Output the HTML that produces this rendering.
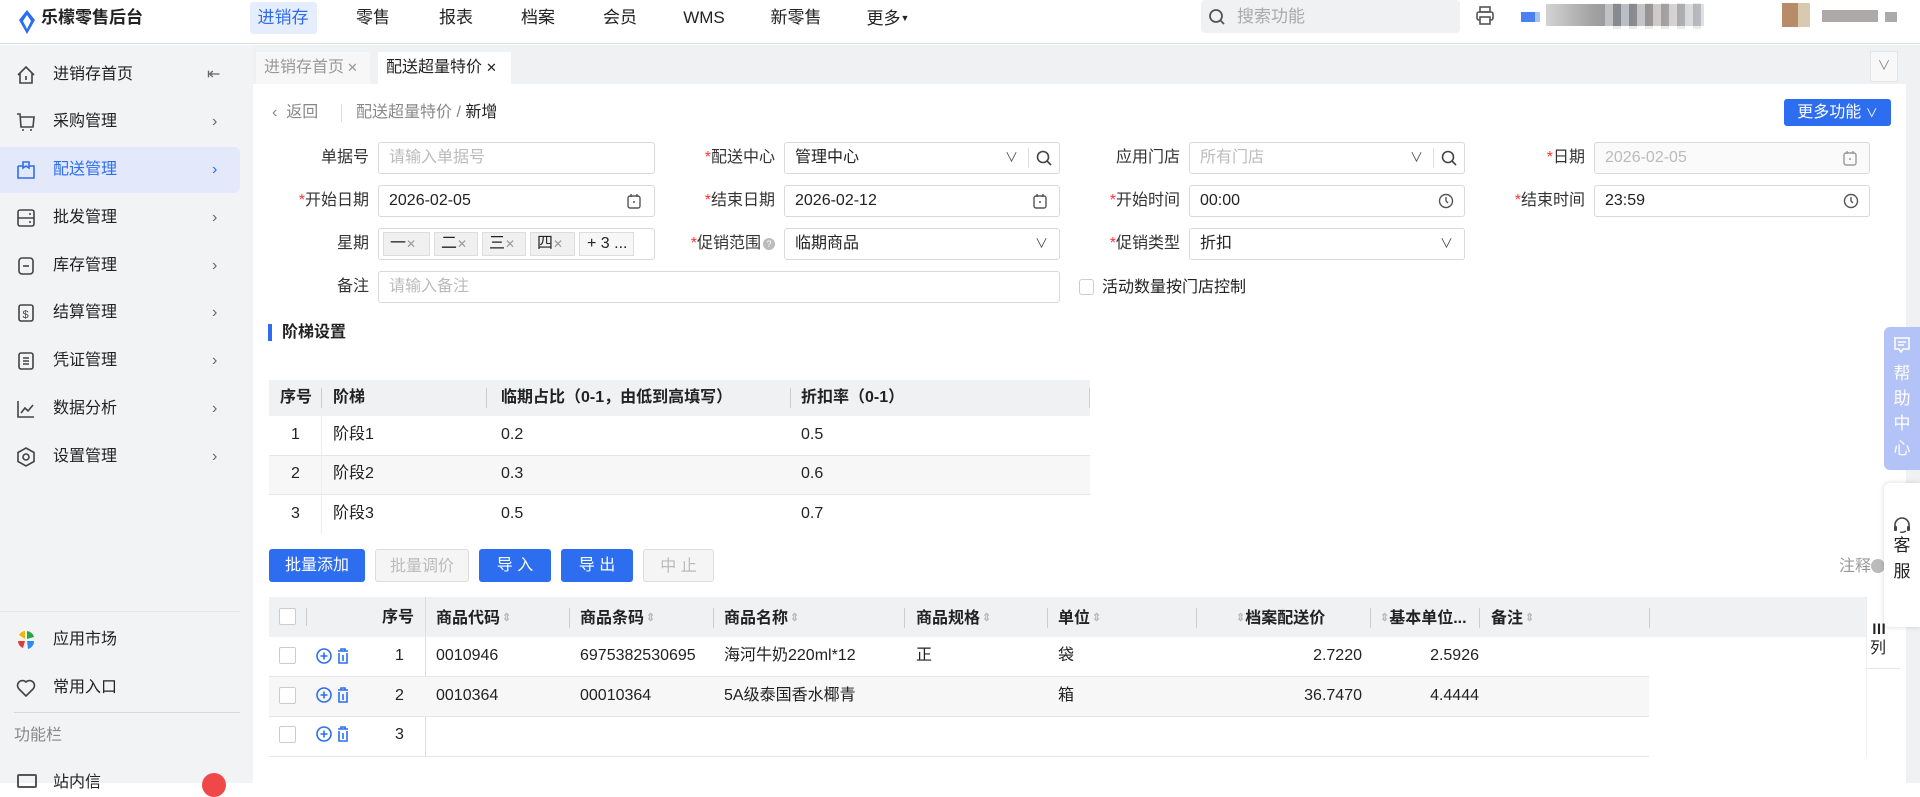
<!DOCTYPE html>
<html><head><meta charset="utf-8">
<style>
*{box-sizing:border-box;margin:0;padding:0}
body{width:1920px;height:783px;overflow:hidden;position:relative;background:#fff;font-family:"Liberation Sans","Noto Sans CJK SC",sans-serif;font-size:16px;line-height:22px;color:#222}
.a{position:absolute}
.hdr{left:0;top:0;width:1920px;height:44px;background:#fff;border-bottom:1px solid #ddd}
.nav{top:0;height:44px;line-height:36px;font-size:17px;color:#222;transform:translateX(-50%)}
.side{left:0;top:45px;width:253px;height:738px;background:#f2f3f5}
.si{left:0;width:240px;height:46px;line-height:46px;padding-left:53px;font-size:16px;color:#222}
.si svg{position:absolute;left:16px;top:13px}
.si .ch{position:absolute;left:212px;top:0;color:#666;font-size:16px}
.tabbar{left:253px;top:45px;width:1667px;height:39px;background:#f0f1f3}
.lab{height:32px;line-height:32px;text-align:right;font-size:16px;color:#333}
.lab i{color:#f33;font-style:normal}
.inp{height:32px;border:1px solid #d9d9d9;border-radius:3px;line-height:30px;padding-left:10px;font-size:16px;color:#222;background:#fff}
.ph{color:#bbb}
.ico{position:absolute;top:7px}
.th{background:#f0f1f3;font-weight:bold;color:#222}
.btn{height:33px;line-height:33px;text-align:center;border-radius:3px;font-size:16px}
.bb{background:#2d6df0;color:#fff}
.bd{background:#f5f5f5;color:#bbb;border:1px solid #ddd}
.sep{width:1px;background:#ccc}
.c{font-size:16px;color:#222;line-height:22px}
.so{display:inline-block;color:#bbb;font-size:11px;vertical-align:2px;margin-left:2px}
.cb{width:17px;height:17px;border:1px solid #ccc;border-radius:2px;background:#fff}
</style></head><body>
<div class="a hdr"></div>
<svg class="a" style="left:17px;top:10px" width="20" height="24" viewBox="0 0 20 24"><path d="M10 0 L18 10 L10 24 L2 10 Z" fill="#2d6df0"/><path d="M10 5 L14 11 L10 19 L6 11Z" fill="#fff"/></svg>
<div class="a" style="left:41px;top:0;line-height:36px;font-size:17px;font-weight:bold;color:#222">乐檬零售后台</div>
<div class="a" style="left:250px;top:2px;width:67px;height:32px;background:#e6edfc;border-radius:3px"></div>
<div class="a nav" style="left:283px;color:#2d6df0">进销存</div>
<div class="a nav" style="left:373px">零售</div>
<div class="a nav" style="left:456px">报表</div>
<div class="a nav" style="left:538px">档案</div>
<div class="a nav" style="left:620px">会员</div>
<div class="a nav" style="left:704px">WMS</div>
<div class="a nav" style="left:796px">新零售</div>
<div class="a nav" style="left:888px">更多<span style="font-size:9px;vertical-align:3px">▼</span></div>
<div class="a" style="left:1201px;top:0;width:259px;height:33px;background:#f0f1f3;border-radius:4px"></div>
<svg class="a" style="left:1208px;top:8px" width="18" height="18" viewBox="0 0 18 18"><circle cx="8" cy="8" r="6" fill="none" stroke="#555" stroke-width="1.8"/><path d="M12.5 12.5L16 16" stroke="#555" stroke-width="1.8"/></svg>
<div class="a" style="left:1237px;top:0;line-height:33px;font-size:17px;color:#aaa">搜索功能</div>
<svg class="a" style="left:1476px;top:6px" width="18" height="20" viewBox="0 0 18 20"><rect x="4" y="1" width="10" height="5" fill="none" stroke="#555" stroke-width="1.6"/><rect x="1" y="6" width="16" height="8" rx="2" fill="none" stroke="#555" stroke-width="1.6"/><rect x="4" y="11" width="10" height="7" fill="#fff" stroke="#555" stroke-width="1.6"/></svg>
<div class="a" style="left:1521px;top:12px;width:14px;height:10px;background:#4a80f0"></div>
<div class="a" style="left:1535px;top:12px;width:5px;height:10px;background:#a8c2f5"></div>
<div class="a" style="left:1546px;top:4px;width:158px;height:22px;background:linear-gradient(90deg,#c8c8c8,#8a8a8a 30%,#707680 50%,#9a9090 70%,#bcc2c8);opacity:.8"></div>
<div class="a" style="left:1605px;top:3px;width:100px;height:26px;background:repeating-linear-gradient(90deg,rgba(255,255,255,.4) 0 8px,rgba(0,0,0,.08) 8px 16px)"></div>
<div class="a" style="left:1782px;top:3px;width:16px;height:24px;background:#b88c68"></div>
<div class="a" style="left:1798px;top:3px;width:12px;height:24px;background:#d8cab0"></div>
<div class="a" style="left:1822px;top:10px;width:56px;height:12px;background:#9a9494;opacity:.8"></div>
<div class="a" style="left:1885px;top:12px;width:12px;height:10px;background:#aaa"></div>

<div class="a side"></div>
<div class="a si" style="top:52px"><svg width="20" height="20" viewBox="0 0 20 20"><path d="M2 10L10 2L18 10M4 8V18H16V8M10 11V15" fill="none" stroke="#444" stroke-width="1.6"/></svg>进销存首页<span class="ch" style="left:207px">⇤</span></div>
<div class="a si" style="top:99px"><svg width="20" height="20" viewBox="0 0 20 20"><path d="M1 2H4L5 15H17L18 5H5" fill="none" stroke="#444" stroke-width="1.6"/><circle cx="7" cy="18" r="1" fill="#444"/><circle cx="15" cy="18" r="1" fill="#444"/></svg>采购管理<span class="ch">›</span></div>
<div class="a si" style="top:147px;background:#e3e9fa;border-radius:0 6px 6px 0;color:#2d6df0"><svg width="20" height="20" viewBox="0 0 20 20"><path d="M2 6V18H18V6L13 6M7 6H2M7 2V8L10 6L13 8V2Z" fill="none" stroke="#2d6df0" stroke-width="1.6"/></svg>配送管理<span class="ch" style="color:#2d6df0">›</span></div>
<div class="a si" style="top:195px"><svg width="20" height="20" viewBox="0 0 20 20"><rect x="2" y="2" width="16" height="16" rx="2" fill="none" stroke="#444" stroke-width="1.6"/><path d="M2 10H18M13 6H15M13 14H15" stroke="#444" stroke-width="1.6"/></svg>批发管理<span class="ch">›</span></div>
<div class="a si" style="top:243px"><svg width="20" height="20" viewBox="0 0 20 20"><rect x="3" y="2" width="14" height="16" rx="3" fill="none" stroke="#444" stroke-width="1.6"/><path d="M7 10H13" stroke="#444" stroke-width="1.6"/></svg>库存管理<span class="ch">›</span></div>
<div class="a si" style="top:290px"><svg width="20" height="20" viewBox="0 0 20 20"><rect x="3" y="2" width="14" height="16" rx="2" fill="none" stroke="#444" stroke-width="1.6"/><text x="6.5" y="15" font-size="11" fill="#444" font-family="Liberation Sans">$</text></svg>结算管理<span class="ch">›</span></div>
<div class="a si" style="top:338px"><svg width="20" height="20" viewBox="0 0 20 20"><rect x="3" y="2" width="14" height="16" rx="2" fill="none" stroke="#444" stroke-width="1.6"/><path d="M7 7H13M7 10H13M7 13H13" stroke="#444" stroke-width="1.4"/></svg>凭证管理<span class="ch">›</span></div>
<div class="a si" style="top:386px"><svg width="20" height="20" viewBox="0 0 20 20"><path d="M2 2V18H18M5 14L9 9L12 12L17 6" fill="none" stroke="#444" stroke-width="1.6"/></svg>数据分析<span class="ch">›</span></div>
<div class="a si" style="top:434px"><svg width="20" height="20" viewBox="0 0 20 20"><path d="M10 1L18 5.5V14.5L10 19L2 14.5V5.5Z" fill="none" stroke="#444" stroke-width="1.6"/><circle cx="10" cy="10" r="3" fill="none" stroke="#444" stroke-width="1.6"/></svg>设置管理<span class="ch">›</span></div>
<div class="a" style="left:0;top:611px;width:240px;height:1px;background:#e8e9eb"></div>
<div class="a si" style="top:617px"><svg width="20" height="20" viewBox="0 0 20 20"><path d="M9 1A8 8 0 0 0 3 5L9 9Z" fill="#f5b400"/><path d="M11 1A8 8 0 0 1 18 7L11 9Z" fill="#27a844"/><path d="M2 11L9 11L7 18A8 8 0 0 1 2 11Z" fill="#e53935"/><path d="M11 11H18A8 8 0 0 1 12 19Z" fill="#2d8cf0"/></svg>应用市场</div>
<div class="a si" style="top:665px"><svg width="20" height="20" viewBox="0 0 20 20"><path d="M10 18L3 11A4.5 4.5 0 0 1 10 4A4.5 4.5 0 0 1 17 11Z" fill="none" stroke="#444" stroke-width="1.6"/></svg>常用入口</div>
<div class="a" style="left:14px;top:712px;width:226px;height:1px;background:#d8d8d8"></div>
<div class="a" style="left:14px;top:725px;font-size:16px;color:#888">功能栏</div>
<div class="a" style="left:17px;top:774px;width:20px;height:14px;border:2px solid #555;border-radius:2px"></div>
<div class="a" style="left:53px;top:772px;font-size:16px">站内信</div>
<div class="a" style="left:202px;top:773px;width:24px;height:24px;border-radius:12px;background:#f04848"></div>

<div class="a tabbar"></div>
<div class="a" style="left:256px;top:52px;width:114px;height:32px;background:#f7f7f8;line-height:32px;padding-left:8px;font-size:16px;color:#999">进销存首页<span style="font-size:13px;margin-left:3px">✕</span></div>
<div class="a" style="left:378px;top:52px;width:133px;height:32px;background:#fff;line-height:32px;padding-left:8px;font-size:16px;color:#222">配送超量特价<span style="font-size:13px;margin-left:4px">✕</span></div>
<div class="a" style="left:1870px;top:51px;width:28px;height:31px;background:#f8f8f8;border:1px solid #e5e5e5;text-align:center;line-height:28px;color:#888;font-size:13px">∨</div>
<div class="a" style="left:1906px;top:84px;width:14px;height:699px;background:#f0f1f3"></div>

<div class="a" style="left:272px;top:102px;font-size:16px;color:#888">‹&nbsp; 返回</div>
<div class="a" style="left:341px;top:104px;width:1px;height:18px;background:#ddd"></div>
<div class="a" style="left:356px;top:102px;font-size:16px;color:#888">配送超量特价 / <span style="color:#222">新增</span></div>
<div class="a btn bb" style="left:1784px;top:99px;width:107px;height:27px;line-height:27px;font-size:16px">更多功能 <span style="font-size:12px">∨</span></div>

<!-- row1 -->
<div class="a lab" style="left:270px;top:142px;width:99px">单据号</div>
<div class="a inp ph" style="left:378px;top:142px;width:277px">请输入单据号</div>
<div class="a lab" style="left:676px;top:142px;width:99px"><i>*</i>配送中心</div>
<div class="a inp" style="left:784px;top:142px;width:276px">管理中心<span class="a" style="left:220px;top:0;color:#555;font-size:13px;line-height:30px">∨</span><span class="a" style="left:243px;top:5px;height:20px;width:1px;background:#ddd"></span><svg class="ico" style="left:251px" width="16" height="16" viewBox="0 0 16 16"><circle cx="7" cy="7" r="5.5" fill="none" stroke="#444" stroke-width="1.6"/><path d="M11 11L15 15" stroke="#444" stroke-width="1.6"/></svg></div>
<div class="a lab" style="left:1081px;top:142px;width:99px">应用门店</div>
<div class="a inp ph" style="left:1189px;top:142px;width:276px">所有门店<span class="a" style="left:220px;top:0;color:#555;font-size:13px;line-height:30px">∨</span><span class="a" style="left:243px;top:5px;height:20px;width:1px;background:#ddd"></span><svg class="ico" style="left:251px" width="16" height="16" viewBox="0 0 16 16"><circle cx="7" cy="7" r="5.5" fill="none" stroke="#444" stroke-width="1.6"/><path d="M11 11L15 15" stroke="#444" stroke-width="1.6"/></svg></div>
<div class="a lab" style="left:1486px;top:142px;width:99px"><i>*</i>日期</div>
<div class="a inp ph" style="left:1594px;top:142px;width:276px;background:#fafafa">2026-02-05<svg class="ico" style="left:248px" width="14" height="16" viewBox="0 0 14 16"><rect x="1" y="3" width="12" height="12" rx="2" fill="none" stroke="#999" stroke-width="1.4"/><path d="M4 1V4M10 1V4M6 9H8" stroke="#999" stroke-width="1.4"/></svg></div>
<!-- row2 -->
<div class="a lab" style="left:270px;top:185px;width:99px"><i>*</i>开始日期</div>
<div class="a inp" style="left:378px;top:185px;width:277px">2026-02-05<svg class="ico" style="left:248px" width="14" height="16" viewBox="0 0 14 16"><rect x="1" y="3" width="12" height="12" rx="2" fill="none" stroke="#555" stroke-width="1.4"/><path d="M4 1V4M10 1V4M6 9H8" stroke="#555" stroke-width="1.4"/></svg></div>
<div class="a lab" style="left:676px;top:185px;width:99px"><i>*</i>结束日期</div>
<div class="a inp" style="left:784px;top:185px;width:276px">2026-02-12<svg class="ico" style="left:248px" width="14" height="16" viewBox="0 0 14 16"><rect x="1" y="3" width="12" height="12" rx="2" fill="none" stroke="#555" stroke-width="1.4"/><path d="M4 1V4M10 1V4M6 9H8" stroke="#555" stroke-width="1.4"/></svg></div>
<div class="a lab" style="left:1081px;top:185px;width:99px"><i>*</i>开始时间</div>
<div class="a inp" style="left:1189px;top:185px;width:276px">00:00<svg class="ico" style="left:248px" width="16" height="16" viewBox="0 0 16 16"><circle cx="8" cy="8" r="6.5" fill="none" stroke="#555" stroke-width="1.4"/><path d="M8 4V8L10 10" fill="none" stroke="#555" stroke-width="1.4"/></svg></div>
<div class="a lab" style="left:1486px;top:185px;width:99px"><i>*</i>结束时间</div>
<div class="a inp" style="left:1594px;top:185px;width:276px">23:59<svg class="ico" style="left:248px" width="16" height="16" viewBox="0 0 16 16"><circle cx="8" cy="8" r="6.5" fill="none" stroke="#555" stroke-width="1.4"/><path d="M8 4V8L10 10" fill="none" stroke="#555" stroke-width="1.4"/></svg></div>
<!-- row3 -->
<div class="a lab" style="left:270px;top:228px;width:99px">星期</div>
<div class="a inp" style="left:378px;top:228px;width:277px;padding-left:3px">
<span class="a" style="left:4px;top:3px;width:47px;height:24px;background:#f0f0f0;border:1px solid #ddd;line-height:22px;padding-left:6px">一<span style="color:#999;font-size:12px">✕</span></span>
<span class="a" style="left:55px;top:3px;width:44px;height:24px;background:#f0f0f0;border:1px solid #ddd;line-height:22px;padding-left:6px">二<span style="color:#999;font-size:12px">✕</span></span>
<span class="a" style="left:103px;top:3px;width:44px;height:24px;background:#f0f0f0;border:1px solid #ddd;line-height:22px;padding-left:6px">三<span style="color:#999;font-size:12px">✕</span></span>
<span class="a" style="left:151px;top:3px;width:45px;height:24px;background:#f0f0f0;border:1px solid #ddd;line-height:22px;padding-left:6px">四<span style="color:#999;font-size:12px">✕</span></span>
<span class="a" style="left:200px;top:3px;width:55px;height:24px;background:#f7f7f7;border:1px solid #ddd;line-height:22px;padding-left:7px">+ 3 ...</span></div>
<div class="a lab" style="left:660px;top:228px;width:115px"><i>*</i>促销范围<span style="display:inline-block;width:12px;height:12px;border-radius:6px;background:#bbb;color:#fff;font-size:9px;line-height:12px;text-align:center;vertical-align:1px;margin-left:2px">?</span></div>
<div class="a inp" style="left:784px;top:228px;width:276px">临期商品<span class="a" style="left:250px;top:0;color:#555;font-size:13px;line-height:30px">∨</span></div>
<div class="a lab" style="left:1081px;top:228px;width:99px"><i>*</i>促销类型</div>
<div class="a inp" style="left:1189px;top:228px;width:276px">折扣<span class="a" style="left:250px;top:0;color:#555;font-size:13px;line-height:30px">∨</span></div>
<!-- row4 -->
<div class="a lab" style="left:270px;top:271px;width:99px">备注</div>
<div class="a inp ph" style="left:378px;top:271px;width:682px">请输入备注</div>
<div class="a cb" style="left:1079px;top:279px;width:15px;height:16px;border-radius:3px"></div>
<div class="a" style="left:1102px;top:277px;font-size:16px">活动数量按门店控制</div>

<div class="a" style="left:268px;top:324px;width:4px;height:17px;background:#2d6df0"></div>
<div class="a" style="left:282px;top:322px;font-size:16px;font-weight:bold">阶梯设置</div>

<!-- table1 -->
<div class="a th" style="left:269px;top:380px;width:821px;height:36px"></div>
<div class="a" style="left:280px;top:387px;font-weight:bold">序号</div>
<div class="a sep" style="left:321px;top:388px;height:20px"></div>
<div class="a" style="left:333px;top:387px;font-weight:bold">阶梯</div>
<div class="a sep" style="left:486px;top:388px;height:20px"></div>
<div class="a" style="left:501px;top:387px;font-weight:bold">临期占比（0-1，由低到高填写）</div>
<div class="a sep" style="left:790px;top:388px;height:20px"></div>
<div class="a" style="left:801px;top:387px;font-weight:bold">折扣率（0-1）</div>
<div class="a sep" style="left:1089px;top:388px;height:20px"></div>
<div class="a" style="left:269px;top:455px;width:821px;height:39px;background:#f7f7f8"></div>
<div class="a" style="left:269px;top:455px;width:821px;height:1px;background:#e6e6e6"></div>
<div class="a" style="left:269px;top:494px;width:821px;height:1px;background:#e6e6e6"></div>
<div class="a" style="left:321px;top:416px;width:1px;height:118px;background:#eee"></div>
<div class="a c" style="left:291px;top:424px">1</div><div class="a c" style="left:333px;top:424px">阶段1</div><div class="a c" style="left:501px;top:424px">0.2</div><div class="a c" style="left:801px;top:424px">0.5</div>
<div class="a c" style="left:291px;top:463px">2</div><div class="a c" style="left:333px;top:463px">阶段2</div><div class="a c" style="left:501px;top:463px">0.3</div><div class="a c" style="left:801px;top:463px">0.6</div>
<div class="a c" style="left:291px;top:503px">3</div><div class="a c" style="left:333px;top:503px">阶段3</div><div class="a c" style="left:501px;top:503px">0.5</div><div class="a c" style="left:801px;top:503px">0.7</div>

<!-- buttons -->
<div class="a btn bb" style="left:269px;top:549px;width:96px">批量添加</div>
<div class="a btn bd" style="left:375px;top:549px;width:94px">批量调价</div>
<div class="a btn bb" style="left:479px;top:549px;width:72px">导 入</div>
<div class="a btn bb" style="left:561px;top:549px;width:72px">导 出</div>
<div class="a btn bd" style="left:643px;top:549px;width:71px">中 止</div>
<div class="a" style="left:1839px;top:556px;font-size:16px;color:#999">注释</div>
<div class="a" style="left:1871px;top:559px;width:14px;height:14px;border-radius:7px;background:#bbb"></div>

<!-- table2 -->
<div class="a th" style="left:269px;top:597px;width:1597px;height:40px"></div>
<div class="a cb" style="left:279px;top:608px"></div>
<div class="a sep" style="left:306px;top:608px;height:18px"></div>
<div class="a" style="left:382px;top:607px;font-weight:bold">序号</div>
<div class="a" style="left:425px;top:597px;width:1px;height:159px;background:#ddd"></div>
<div class="a" style="left:436px;top:607px;font-weight:bold">商品代码<span class="so">⇕</span></div>
<div class="a sep" style="left:569px;top:608px;height:20px"></div>
<div class="a" style="left:580px;top:607px;font-weight:bold">商品条码<span class="so">⇕</span></div>
<div class="a sep" style="left:713px;top:608px;height:20px"></div>
<div class="a" style="left:724px;top:607px;font-weight:bold">商品名称<span class="so">⇕</span></div>
<div class="a sep" style="left:904px;top:608px;height:20px"></div>
<div class="a" style="left:916px;top:607px;font-weight:bold">商品规格<span class="so">⇕</span></div>
<div class="a sep" style="left:1047px;top:608px;height:20px"></div>
<div class="a" style="left:1058px;top:607px;font-weight:bold">单位<span class="so">⇕</span></div>
<div class="a sep" style="left:1196px;top:608px;height:20px"></div>
<div class="a" style="left:1234px;top:607px;font-weight:bold"><span class="so">⇕</span>档案配送价</div>
<div class="a sep" style="left:1370px;top:608px;height:20px"></div>
<div class="a" style="left:1378px;top:607px;font-weight:bold"><span class="so">⇕</span>基本单位...</div>
<div class="a sep" style="left:1479px;top:608px;height:20px"></div>
<div class="a" style="left:1491px;top:607px;font-weight:bold">备注<span class="so">⇕</span></div>
<div class="a sep" style="left:1649px;top:608px;height:20px"></div>
<div class="a" style="left:1866px;top:597px;width:40px;height:160px;background:#fff;border-left:1px solid #eee"></div>
<div class="a" style="left:1872px;top:618px;font-size:14px;font-weight:bold">Ⅲ</div>
<div class="a" style="left:1870px;top:638px;font-size:16px">列</div>
<div class="a" style="left:1866px;top:668px;width:34px;height:1px;background:#e6e6e6"></div>

<div class="a" style="left:269px;top:676px;width:1380px;height:40px;background:#f7f7f8"></div>
<div class="a" style="left:269px;top:676px;width:1380px;height:1px;background:#e6e6e6"></div>
<div class="a" style="left:269px;top:716px;width:1380px;height:1px;background:#e6e6e6"></div>
<div class="a" style="left:269px;top:756px;width:1380px;height:1px;background:#e6e6e6"></div>

<svg width="0" height="0" style="position:absolute"><defs>
<g id="ic"><circle cx="8" cy="9" r="7" fill="none" stroke="#2d6df0" stroke-width="1.6"/><path d="M8 5.5V12.5M4.5 9H11.5" stroke="#2d6df0" stroke-width="1.6"/><path d="M22 4H32M25 4V2H29V4M23 6V16H31V6M27 8V14" fill="none" stroke="#2d6df0" stroke-width="1.6"/></g></defs></svg>
<div class="a cb" style="left:279px;top:647px"></div>
<svg class="a" style="left:316px;top:647px" width="36" height="18"><use href="#ic"/></svg>
<div class="a c" style="left:395px;top:645px">1</div>
<div class="a c" style="left:436px;top:645px">0010946</div>
<div class="a c" style="left:580px;top:645px">6975382530695</div>
<div class="a c" style="left:724px;top:645px">海河牛奶220ml*12</div>
<div class="a c" style="left:916px;top:645px">正</div>
<div class="a c" style="left:1058px;top:645px">袋</div>
<div class="a c" style="left:1300px;top:645px;width:62px;text-align:right">2.7220</div>
<div class="a c" style="left:1420px;top:645px;width:59px;text-align:right">2.5926</div>

<div class="a cb" style="left:279px;top:687px"></div>
<svg class="a" style="left:316px;top:686px" width="36" height="18"><use href="#ic"/></svg>
<div class="a c" style="left:395px;top:685px">2</div>
<div class="a c" style="left:436px;top:685px">0010364</div>
<div class="a c" style="left:580px;top:685px">00010364</div>
<div class="a c" style="left:724px;top:685px">5A级泰国香水椰青</div>
<div class="a c" style="left:1058px;top:685px">箱</div>
<div class="a c" style="left:1290px;top:685px;width:72px;text-align:right">36.7470</div>
<div class="a c" style="left:1420px;top:685px;width:59px;text-align:right">4.4444</div>

<div class="a cb" style="left:279px;top:726px"></div>
<svg class="a" style="left:316px;top:725px" width="36" height="18"><use href="#ic"/></svg>
<div class="a c" style="left:395px;top:724px">3</div>

<!-- right floats -->
<div class="a" style="left:1884px;top:327px;width:36px;height:143px;background:#b3c2f7;border-radius:6px 0 0 6px;color:#fff;text-align:center;font-size:17px;line-height:25px;padding-top:34px">帮<br>助<br>中<br>心</div>
<svg class="a" style="left:1893px;top:336px" width="18" height="18" viewBox="0 0 18 18"><path d="M2 2H16V13H10L8 16L6 13H2Z" fill="none" stroke="#fff" stroke-width="1.5"/><path d="M5 6H13M5 9H11" stroke="#fff" stroke-width="1.5"/></svg>
<div class="a" style="left:1884px;top:483px;width:36px;height:144px;background:#fff;border-radius:6px 0 0 6px;box-shadow:0 0 6px rgba(0,0,0,.15);text-align:center;font-size:17px;line-height:26px;padding-top:50px;color:#222">客<br>服</div>
<svg class="a" style="left:1892px;top:516px" width="20" height="20" viewBox="0 0 20 20"><path d="M3 11V9A7 7 0 0 1 17 9V11" fill="none" stroke="#444" stroke-width="1.6"/><rect x="2" y="10" width="3" height="5" rx="1" fill="#444"/><rect x="15" y="10" width="3" height="5" rx="1" fill="#444"/><path d="M8 16Q11 17 14 15" fill="none" stroke="#444" stroke-width="1.4"/></svg>
</body></html>
